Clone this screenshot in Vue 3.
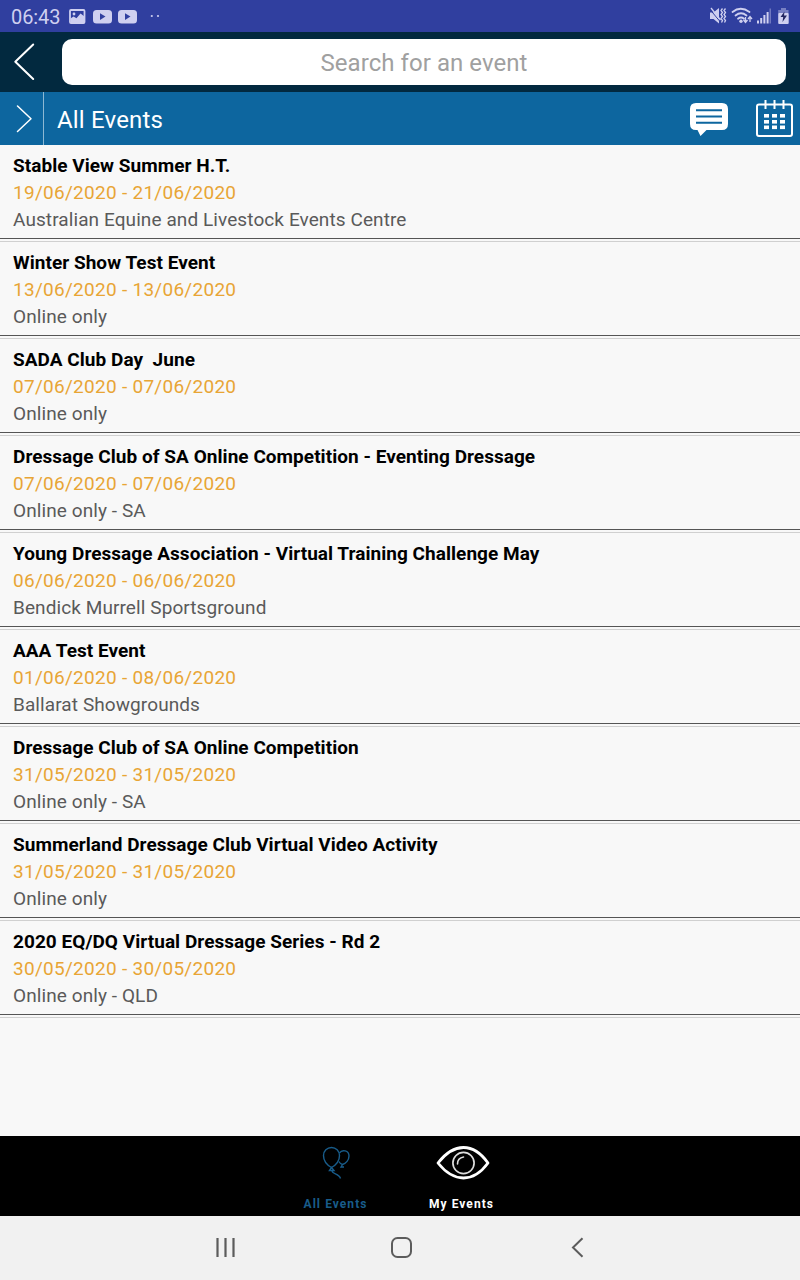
<script setup>
const events = [
  { name: 'Stable View Summer H.T.', date: '19/06/2020 - 21/06/2020', place: 'Australian Equine and Livestock Events Centre' },
  { name: 'Winter Show Test Event', date: '13/06/2020 - 13/06/2020', place: 'Online only' },
  { name: 'SADA Club Day  June', date: '07/06/2020 - 07/06/2020', place: 'Online only' },
  { name: 'Dressage Club of SA Online Competition - Eventing Dressage', date: '07/06/2020 - 07/06/2020', place: 'Online only - SA' },
  { name: 'Young Dressage Association - Virtual Training Challenge May', date: '06/06/2020 - 06/06/2020', place: 'Bendick Murrell Sportsground' },
  { name: 'AAA Test Event', date: '01/06/2020 - 08/06/2020', place: 'Ballarat Showgrounds' },
  { name: 'Dressage Club of SA Online Competition', date: '31/05/2020 - 31/05/2020', place: 'Online only - SA' },
  { name: 'Summerland Dressage Club Virtual Video Activity', date: '31/05/2020 - 31/05/2020', place: 'Online only' },
  { name: '2020 EQ/DQ Virtual Dressage Series - Rd 2', date: '30/05/2020 - 30/05/2020', place: 'Online only - QLD' },
]
</script>

<template>
  <div class="screen">
    <div class="status">
      <span class="clock">06:43</span>
      <svg class="left-icons" width="100" height="32" viewBox="0 0 100 32">
        <rect x="3" y="10" width="14.500" height="13" rx="1" fill="none" stroke="#cfd0f0" stroke-width="1.800" />
        <circle cx="7" cy="14" r="1.400" fill="#cfd0f0" />
        <path d="M3.500 22.500v-4l3-2 3 1.800 4-4.800 4 3v6z" fill="#cfd0f0" />
        <rect x="26" y="10" width="19" height="13.500" rx="3.500" fill="#cfd0f0" />
        <path d="M33 13.300v6.600l5.500-3.300z" fill="#303f9f" />
        <rect x="51" y="10" width="19" height="13.500" rx="3.500" fill="#cfd0f0" />
        <path d="M58 13.300v6.600l5.500-3.300z" fill="#303f9f" />
        <circle cx="84.800" cy="16" r="1.100" fill="#cfd0f0" />
        <circle cx="91" cy="16" r="1.100" fill="#cfd0f0" />
      </svg>
      <svg class="right-icons" width="92" height="32" viewBox="0 0 92 32">
        <g fill="none" stroke="#cfd0f0">
          <path d="M2 12.500h3.500l5.500-4.500v15.500l-5.500-4.500H2z" fill="#cfd0f0" stroke="none" />
          <path d="M2 9.500l10 12" stroke="#303f9f" stroke-width="1" />
          <path d="M3 8l9.500 12" stroke-width="1.300" />
          <path d="M14.500 8.500l-1.500 2 1.500 2-1.500 2 1.500 2-1.500 2 1.500 2-1 2M17.500 8.500l-1.500 2 1.500 2-1.500 2 1.500 2-1.500 2 1.500 2-1 2" stroke-width="1.300" />
          <path d="M24.500 12q8-6.500 17 0M27.500 15.500q5.500-4.500 11 0M30 18.700q3-2.500 6 0" stroke-width="1.800" stroke-linecap="round" />
          <path d="M37.500 17v5m-2-2l2 2.500 2-2.500M42 22v-5m-2 2l2-2.500 2 2.500" stroke-width="1.300" />
        </g>
        <circle cx="33" cy="21.300" r="1.700" fill="#cfd0f0" />
        <g fill="#cfd0f0">
          <rect x="49" y="20.500" width="2" height="3" /><rect x="52.200" y="18" width="2" height="5.500" />
          <rect x="55.400" y="15" width="2" height="8.500" /><rect x="58.600" y="12" width="2" height="11.500" />
          <rect x="61.500" y="8.500" width="1.500" height="15" opacity=".4" />
          <path d="M73 8h5v2h2.500v3.500H70.200V10H73z" opacity=".45" />
          <rect x="70.200" y="13" width="10.500" height="11" rx="1" />
        </g>
        <path d="M76.500 11.500l-4 5.500h2.700l-.7 5 4.500-6.500h-3z" fill="#232760" />
      </svg>
    </div>

    <header class="search-bar">
      <svg class="back" width="62" height="60" viewBox="0 0 62 60">
        <path d="M33.200 12.500L15.300 29.800 33.200 47" fill="none" stroke="#fff" stroke-width="2" stroke-linecap="round" stroke-linejoin="round" />
      </svg>
      <div class="search">Search for an event</div>
    </header>

    <div class="title-bar">
      <div class="expand">
        <svg width="43" height="53" viewBox="0 0 43 53">
          <path d="M17.500 14L31 26.800 17.500 39.500" fill="none" stroke="#fff" stroke-width="1.500" stroke-linecap="round" stroke-linejoin="round" />
        </svg>
      </div>
      <h1>All Events</h1>
      <svg width="115" height="53" viewBox="0 0 115 53">
        <path d="M11 11h26q6 0 6 6v15q0 6-6 6H21.500l-6 6-3-6H11q-6 0-6-6V17q0-6 6-6z" fill="#fff" />
        <path d="M11 18.300h26M11 24.600h26M11 30.800h26" stroke="#0d669f" stroke-width="2" />
        <rect x="72" y="12.500" width="35" height="31.500" rx="2" fill="none" stroke="#fff" stroke-width="2" />
        <path d="M80.500 8v9M89.500 8v9M98.500 8v9" stroke="#fff" stroke-width="2" />
        <g fill="#fff">
          <rect x="79" y="22" width="5" height="3.600" /><rect x="87" y="22" width="5" height="3.600" /><rect x="95" y="22" width="5" height="3.600" />
          <rect x="79" y="28" width="5" height="3.600" /><rect x="87" y="28" width="5" height="3.600" /><rect x="95" y="28" width="5" height="3.600" />
          <rect x="79" y="33.500" width="5" height="3.600" /><rect x="87" y="33.500" width="5" height="3.600" /><rect x="95" y="33.500" width="5" height="3.600" />
        </g>
      </svg>
    </div>

    <main class="list">
      <article v-for="e in events" :key="e.name" class="event">
        <h2>{{ e.name }}</h2>
        <p class="date">{{ e.date }}</p>
        <p class="place">{{ e.place }}</p>
        <div class="rule"></div>
      </article>
    </main>

    <nav class="tabs">
      <div class="tab active">
        <svg width="60" height="50" viewBox="0 0 60 50">
          <g fill="none" stroke="#185c8a" stroke-width="1.400" transform="translate(-1 0)">
            <path d="M26.500 31.500c-4.500-2.500-8-7-8-12a8 8 0 0 1 16 0c0 5-3.500 9.500-8 12zM26.500 31.500l-2 3h4.500zM27 34.500c0 4 7 2.500 8.500 8" />
            <path d="M34.500 17c2.500-4 9.500-2.500 9.500 3 0 4-3 7.500-6.500 8.500-1.500-.4-2.800-1.500-3.700-3M37.500 28.500l-1.500 2.500h3" />
          </g>
        </svg>
        <span>All Events</span>
      </div>
      <div class="tab">
        <svg width="60" height="50" viewBox="0 0 60 50">
          <g fill="none" stroke="#fff">
            <path d="M6 27Q18 11.500 31.500 11.500T56 27Q45 42 31.500 42T6 27z" stroke-width="2.800" stroke-linejoin="round" />
            <circle cx="31.500" cy="27" r="10.600" stroke-width="1.700" stroke="#ddd" />
            <path d="M25.500 28q0-6 6-7" stroke-width="1.600" stroke="#ddd" stroke-linecap="round" />
          </g>
        </svg>
        <span>My Events</span>
      </div>
    </nav>

    <footer class="system">
      <svg width="800" height="64" viewBox="0 0 800 64">
        <g fill="none" stroke="#5c5c5c" stroke-width="2">
          <path d="M217.500 22v19M225.500 22v19M233.500 22v19" stroke-width="2.200" />
          <rect x="392" y="22" width="19" height="19" rx="5.500" />
          <path d="M582.500 22.300L573 31.500l9.500 9.200" />
        </g>
      </svg>
    </footer>
  </div>
</template>

<style>
body { margin: 0; }
</style>

<style scoped>
.screen { width: 800px; height: 1280px; display: flex; flex-direction: column; background: #f8f8f8; font-family: Roboto, "Liberation Sans", sans-serif; overflow: hidden; }
svg { display: block; flex: none; }
h1, h2, p { margin: 0; font-weight: 400; }
.status { height: 32px; display: flex; background: #303f9f; color: #cfd0f0; }
.clock { width: 56px; padding-left: 11px; font-size: 20px; line-height: 34px; letter-spacing: -0.1px; }
.left-icons { margin-right: auto; }
.search-bar { height: 60px; display: flex; align-items: center; background: #02293f; }
.search { width: 724px; height: 46px; border-radius: 10px; background: #fff; color: #a0a0a0; font-size: 24px; line-height: 49px; letter-spacing: 0.05px; text-align: center; }
.title-bar { height: 53px; display: flex; background: #0d669f; }
.expand { width: 43px; border-right: 1px solid #8db8d3; }
h1 { flex: 1; padding-left: 13px; color: #fff; font-size: 24px; line-height: 56px; letter-spacing: 0.18px; }
.list { flex: 1; }
.event { height: 90px; padding-top: 7px; display: flex; flex-direction: column; font-size: 19px; line-height: 27px; white-space: pre; }
.event > h2, .event > p { padding-left: 13px; }
h2 { font-size: inherit; font-weight: 700; letter-spacing: 0.04px; color: #000; }
.date { color: #e8a535; letter-spacing: 0.28px; }
.place { color: #5a5a5a; letter-spacing: 0.09px; }
.rule { height: 2px; margin-top: 5px; border-top: 1px solid #555; border-bottom: 1px solid #d0d0d0; }
.tabs { height: 80px; display: flex; justify-content: center; gap: 6px; padding-right: 3px; background: #000; }
.tab { width: 120px; display: flex; flex-direction: column; align-items: center; color: #fff; font-size: 12px; font-weight: 700; letter-spacing: 1.05px; }
.tab span { line-height: 14px; margin-top: 11px; }
.active { color: #185c8a; }
.system { height: 64px; background: #f1f1f1; }
</style>
